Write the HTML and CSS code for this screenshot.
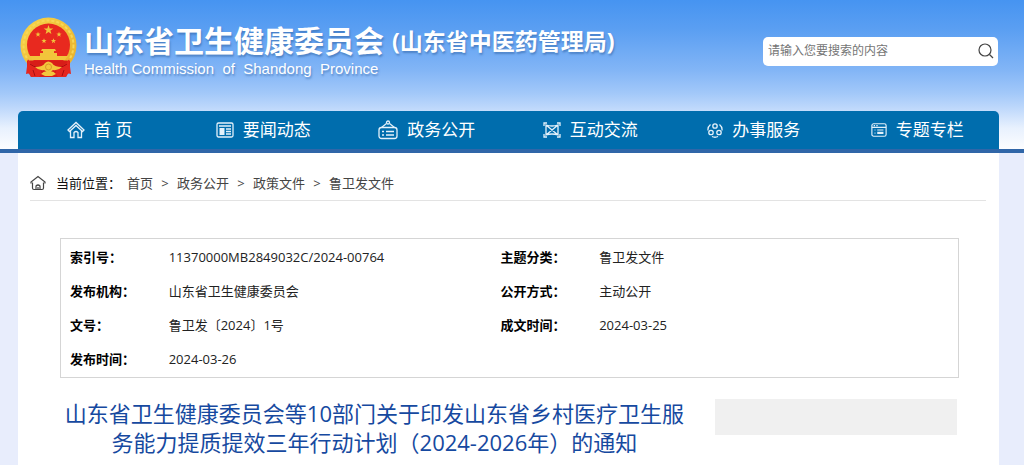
FILE: index.html
```html
<!DOCTYPE html>
<html lang="zh-CN">
<head>
<meta charset="utf-8">
<meta name="viewport" content="width=device-width, initial-scale=1">
<title>山东省卫生健康委员会</title>
<link rel="stylesheet" href="styles.css">
</head>
<body>
<header class="site-header">
  <div class="masthead">
    <div class="brand">
      <svg class="emblem" viewBox="0 0 57 60" aria-hidden="true">
        <defs>
          <linearGradient id="gold" x1="0" y1="0" x2="1" y2="1">
            <stop offset="0" stop-color="#f8d64b"/>
            <stop offset="1" stop-color="#e7ac28"/>
          </linearGradient>
          <path id="star" d="M0-5 1.2-1.6 4.8-1.5 1.9.6 2.9 4 0 2-2.9 4-1.9.6-4.8-1.5-1.2-1.6Z"/>
        </defs>
        <circle cx="28.5" cy="28.5" r="28" fill="url(#gold)"/>
        <circle cx="28.5" cy="28.5" r="25" fill="none" stroke="#f7d756" stroke-width="2" stroke-dasharray="3 2"/>
        <circle cx="28.5" cy="28" r="21.5" fill="#e8291f"/>
        <g fill="#f2c53b">
          <use href="#star" transform="translate(28.5 13)"/>
          <use href="#star" transform="translate(18 17.5) scale(.55)"/>
          <use href="#star" transform="translate(39 17.5) scale(.55)"/>
          <use href="#star" transform="translate(24 24) scale(.55)"/>
          <use href="#star" transform="translate(33.5 24) scale(.55)"/>
          <path d="M22 32h13l1 2h-15zM23 34h11v2H23zM20 36h17v3H20zM9 39h39l-3 4H12z"/>
        </g>
        <path d="M7 43.500h43v9.500l-4 7H11l-4-7z" fill="#d81d18"/>
        <path d="M8 42 6 57q4-2 5 3h8q4-4 1-9Q12 50 8 42ZM49 42l2 15q-4-2-5 3h-8q-4-4-1-9 8-1 12-9Z" fill="#e5261e"/>
        <path d="M10 47q7 5 11 3M47 47q-7 5-11 3M13 53l2 6M44 53l-2 6" fill="none" stroke="#a90e0e"/>
        <path d="M15 50q8 0 10-4 3-3 7 0 2 4 10 4-4 4-9 3-4 4-9 0-5 1-9-3ZM21 57q4-4 7.500-2 4-2 7.500 2l-4 2h-7z" fill="#f3c63c"/>
        <circle cx="28.5" cy="50" r="3" fill="none" stroke="#d9982a"/>
      </svg>
      <div class="brand-text">
        <h1 class="brand-name">山东省卫生健康委员会<span class="brand-sub">(山东省中医药管理局)</span></h1>
        <p class="brand-en">Health Commission  of  Shandong  Province</p>
      </div>
    </div>
    <form class="search" role="search">
      <input class="search-input" type="text" placeholder="请输入您要搜索的内容" aria-label="搜索">
      <button class="search-button" type="button" aria-label="搜索">
        <svg class="search-icon" viewBox="0 0 16 16" aria-hidden="true"><circle cx="7" cy="7" r="6"/><path d="m11.500 11.500 3.500 3.500"/></svg>
      </button>
    </form>
  </div>
  <nav class="nav">
    <a class="nav-link" href="#">
      <svg class="nav-icon" viewBox="0 0 18 18" aria-hidden="true"><path d="M1 9 9 1.500 17 9l-1.500 1.500L9 4.500l-6.500 6zM3.500 10v6.500h3.500v-5q2-2 4 0v5h3.500V10"/></svg>
      首 页
    </a>
    <a class="nav-link" href="#">
      <svg class="nav-icon" viewBox="0 0 18 18" aria-hidden="true"><rect x="1" y="2" width="16" height="14" rx="1.500"/><path d="M3 5h12M10 8h5M10 10.500h5M10 13h5"/><path class="solid" d="M3.500 7h5v7h-5z"/></svg>
      要闻动态
    </a>
    <a class="nav-link" href="#">
      <svg class="nav-icon nav-icon-wide" viewBox="0 0 20 20" aria-hidden="true"><rect x="1" y="7.500" width="18" height="11" rx="2.500"/><path d="m3.500 7.500 5-4m3 0 5 4M4 11.500h2M8 11.500h8M4 15h2M8 15h8"/><circle cx="10" cy="2.500" r="1.500"/></svg>
      政务公开
    </a>
    <a class="nav-link" href="#">
      <svg class="nav-icon" viewBox="0 0 18 18" aria-hidden="true"><path d="M3 4q6 2 12 0v10q-6-2-12 0zM3 4l12 10M15 4 3 14M1 5V2h3M14 2h3v3M17 13v3h-3M4 16H1v-3"/></svg>
      互动交流
    </a>
    <a class="nav-link" href="#">
      <svg class="nav-icon nav-icon-small" viewBox="0 0 16 16" aria-hidden="true"><circle cx="8" cy="4" r="2.200"/><circle cx="4" cy="10.500" r="2.200"/><circle cx="12" cy="10.500" r="2.200"/><path d="M3.500 2.500Q.5 5 1 8.500M12.500 2.500Q15.500 5 15 8.500M5 14.500q3 1.500 6 0"/></svg>
      办事服务
    </a>
    <a class="nav-link" href="#">
      <svg class="nav-icon nav-icon-small" viewBox="0 0 18 18" aria-hidden="true"><rect x="1" y="2" width="16" height="14" rx="2"/><path d="M1 6h16M3 4h1.500M6 4h1.500M4 9h1M7 9h7M4 12.500h1"/><path class="solid" d="M7 11h7v2.500H7z"/></svg>
      专题专栏
    </a>
  </nav>
</header>
<main class="page">
  <nav class="breadcrumb" aria-label="当前位置">
    <svg class="crumb-home" viewBox="0 0 16 16" aria-hidden="true"><path d="M1 8.500V7l7-5.500L15 7v1.500M2.500 7.500V13q0 1.500 1.500 1.500h8q1.500 0 1.500-1.500V7.500M6 14.500V11q2-2 4 0v3.500M8 12v2.500"/></svg>
    <span class="crumb-label">当前位置：</span>
    <a class="crumb" href="#">首页</a><span class="crumb-sep">&gt;</span>
    <a class="crumb" href="#">政务公开</a><span class="crumb-sep">&gt;</span>
    <a class="crumb" href="#">政策文件</a><span class="crumb-sep">&gt;</span>
    <a class="crumb" href="#">鲁卫发文件</a>
  </nav>
  <div class="article">
    <div class="meta">
      <table class="meta-table">
        <colgroup><col class="col-label"><col class="col-value"><col class="col-label"><col></colgroup>
        <tr><th scope="row">索引号：</th><td>11370000MB2849032C/2024-00764</td><th scope="row">主题分类：</th><td>鲁卫发文件</td></tr>
        <tr><th scope="row">发布机构：</th><td>山东省卫生健康委员会</td><th scope="row">公开方式：</th><td>主动公开</td></tr>
        <tr><th scope="row">文号：</th><td>鲁卫发〔2024〕1号</td><th scope="row">成文时间：</th><td>2024-03-25</td></tr>
        <tr><th scope="row">发布时间：</th><td>2024-03-26</td><td></td><td></td></tr>
      </table>
    </div>
    <div class="headline">
      <h2 class="title">山东省卫生健康委员会等10部门关于印发山东省乡村医疗卫生服务能力提质提效三年行动计划（2024-2026年）的通知</h2>
      <aside class="side-panel"></aside>
    </div>
  </div>
</main>
</body>
</html>
```

FILE: styles.css
```css
* {
  box-sizing: border-box;
}

body {
  margin: 0;
  min-height: 100vh;
  display: flex;
  flex-direction: column;
  background: #e8edfc;
  color: #222;
  font: 13px/20px "Open Sans", "Noto Sans CJK SC", sans-serif;
}

a {
  color: inherit;
  text-decoration: none;
}

.site-header {
  padding: 0 25px 0 18px;
  border-bottom: 4px solid #3066a8;
  background: linear-gradient(#4694f1 0, #5b9ff2 30px, #82b5f6 70px, #a2c8f9 93px, #bcd7fb 107px, #e8f1fe 128px, #fcfdff 149px);
}

.masthead {
  display: flex;
  align-items: center;
  justify-content: space-between;
  height: 111px;
  padding: 0 1px 17px 2px;
}

.brand {
  display: flex;
  align-items: center;
  gap: 7px;
}

.emblem {
  width: 57px;
  height: 60px;
}

.brand-text {
  padding-top: 7px;
  color: #fff;
  text-shadow: 1px 2px 2px #3567a899;
}

.brand-name {
  display: flex;
  align-items: center;
  gap: 8px;
  margin: 0;
  font-size: 30px;
  line-height: 36px;
  white-space: nowrap;
}

.brand-sub {
  font-size: 23px;
}

.brand-en {
  margin: 0;
  font: 15px/20px "Liberation Sans", sans-serif;
  white-space: pre;
}

.search {
  display: flex;
  align-items: center;
  width: 235px;
  height: 29px;
  margin-top: 8px;
  padding: 0 4px 0 5px;
  border-radius: 5px;
  background: #fff;
}

.search-input {
  flex: 1;
  min-width: 0;
  padding: 0;
  border: 0;
  outline: 0;
  background: none;
  font: 12px/20px "Open Sans", "Noto Sans CJK SC", sans-serif;
}

.search-input::placeholder {
  color: #757575;
}

.search-button {
  display: flex;
  padding: 0;
  border: 0;
  background: none;
}

.search-icon,
.crumb-home {
  width: 16px;
  height: 16px;
  fill: none;
  stroke: #444;
  stroke-width: 1.2;
}

.nav {
  display: grid;
  grid-template-columns: repeat(6, 1fr);
  height: 38px;
  border-radius: 5px 5px 0 0;
  background: #006dad;
  color: #fff;
  font-size: 17px;
}

.nav-link {
  display: flex;
  align-items: center;
  justify-content: center;
  gap: 9px;
  white-space: nowrap;
}

.nav-icon {
  width: 18px;
  height: 18px;
  fill: none;
  stroke: #e4f1fa;
  stroke-width: 1.3;
}

.nav-icon .solid {
  fill: #e4f1fa;
  stroke: none;
}

.nav-icon-wide {
  width: 20px;
  height: 20px;
}

.nav-icon-small {
  width: 16px;
  height: 16px;
}

.page {
  flex: 1;
  margin: 0 25px 0 18px;
  padding: 12px 13px 0 12px;
  background: #fff;
}

.breadcrumb {
  display: flex;
  align-items: center;
  height: 36px;
  border-bottom: 1px solid #e3e3e3;
  color: #444;
}

.crumb-label {
  margin: 0 6px 0 10px;
  color: #111;
}

.crumb-sep {
  width: 24px;
  text-align: center;
}

.article {
  padding: 37px 27px 0 30px;
}

.meta {
  padding: 1px 0;
  border: 1px solid #d5d5d5;
}

.meta-table {
  width: 100%;
  table-layout: fixed;
  border-collapse: collapse;
}

.col-label {
  width: 11%;
}

.col-value {
  width: 37%;
}

.meta-table th,
.meta-table td {
  height: 34px;
  padding: 0 0 0 9px;
  text-align: left;
}

.meta-table th {
  color: #000;
}

.headline {
  display: flex;
  align-items: flex-start;
  gap: 26px;
  padding: 21px 2px 7px 0;
}

.title {
  flex: 1;
  margin: 0;
  color: #1649a0;
  font-size: 22px;
  font-weight: 400;
  line-height: 29px;
  text-align: center;
}

.side-panel {
  width: 27%;
  height: 36px;
  background: #f0f0f0;
}
```
